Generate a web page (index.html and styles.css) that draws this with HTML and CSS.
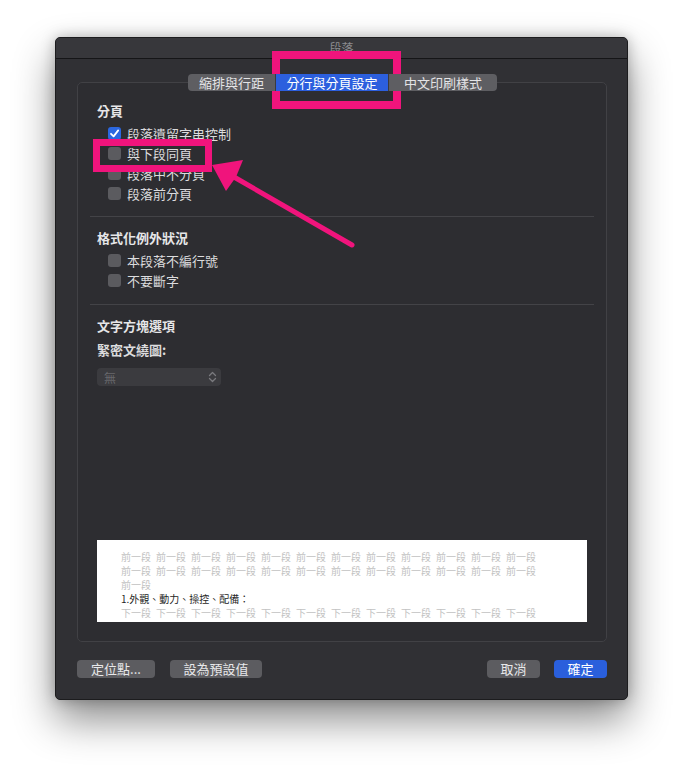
FILE: index.html
```html
<!DOCTYPE html>
<html lang="zh-Hant">
<head>
    <meta charset="UTF-8">
    <meta name="viewport" content="width=device-width, initial-scale=1.0">
    <title>段落</title>
    <link rel="stylesheet" href="styles.css">
</head>
<body>
    <div class="window">
        <div class="titlebar">段落</div>
        <div class="content">
            <div class="tabs">
                <div class="tab tab-indent">縮排與行距</div>
                <div class="tab tab-break active">分行與分頁設定</div>
                <div class="tab tab-cjk">中文印刷樣式</div>
            </div>
            <div class="panel">
                <section class="group group-first">
                    <h2>分頁</h2>
                    <label class="check"><span class="box checked"><svg width="13" height="13" viewBox="0 0 13 13"><path d="M3 6.8 L5.6 9.4 L10.2 3.4" fill="none" stroke="#fff" stroke-width="1.8" stroke-linecap="round" stroke-linejoin="round"/></svg></span>段落遺留字串控制</label>
                    <label class="check"><span class="box"></span>與下段同頁</label>
                    <label class="check"><span class="box"></span>段落中不分頁</label>
                    <label class="check"><span class="box"></span>段落前分頁</label>
                </section>
                <div class="sep"></div>
                <section class="group group-mid">
                    <h2>格式化例外狀況</h2>
                    <label class="check"><span class="box"></span>本段落不編行號</label>
                    <label class="check"><span class="box"></span>不要斷字</label>
                </section>
                <div class="sep"></div>
                <section class="group group-last">
                    <h2>文字方塊選項</h2>
                    <div class="field-label">緊密文繞圖:</div>
                    <div class="select">
                        <span>無</span>
                        <svg width="9" height="12" viewBox="0 0 9 12"><path d="M1.5 4.5 L4.5 1.5 L7.5 4.5 M1.5 7.5 L4.5 10.5 L7.5 7.5" fill="none" stroke="#7a7a7e" stroke-width="1.3" stroke-linecap="round" stroke-linejoin="round"/></svg>
                    </div>
                </section>
                <div class="preview">
                    <div class="preview-text" id="preview"></div>
                </div>
            </div>
            <div class="buttons">
                <div class="btn btn-tabs">定位點...</div>
                <div class="btn btn-default">設為預設值</div>
                <div class="spacer"></div>
                <div class="btn btn-cancel">取消</div>
                <div class="btn btn-ok">確定</div>
            </div>
        </div>
    </div>

    <!-- annotations drawn over the dialog -->
    <div class="mark mark-tab"></div>
    <div class="mark mark-row"></div>
    <svg class="arrow" width="684" height="774" viewBox="0 0 684 774">
        <line x1="234" y1="177" x2="352" y2="245" stroke="#f0147c" stroke-width="5" stroke-linecap="round"/>
        <polygon points="212,165 243,160 236,177 226,191" fill="#f0147c"/>
    </svg>

    <script>
        const preview = document.getElementById('preview');
        let html = '';
        for (let i = 0; i < 25; i++) {
            html += '<span class="word">前一段</span>';
        }
        html += '<div class="current">1.外觀、動力、操控、配備：</div>';
        for (let i = 0; i < 12; i++) {
            html += '<span class="word">下一段</span>';
        }
        preview.innerHTML = html;
    </script>
</body>
</html>
```

FILE: styles.css
```css
* {
    margin: 0;
    padding: 0;
    box-sizing: border-box;
}

body {
    width: 684px;
    height: 774px;
    background: #fff;
    font-family: "Noto Sans CJK TC", "Noto Sans", sans-serif;
    overflow: hidden;
}

.window {
    margin: 37px 0 0 55px;
    width: 573px;
    height: 663px;
    background: #303034;
    border: 1px solid #1c1c1e;
    border-radius: 5px;
    box-shadow: 0 20px 40px rgba(0, 0, 0, 0.45), 0 0 14px rgba(0, 0, 0, 0.25);
    display: flex;
    flex-direction: column;
    overflow: hidden;
}

.titlebar {
    height: 21px;
    background: #37373b;
    border-bottom: 1px solid #151517;
    color: #8c8c90;
    font-size: 12px;
    line-height: 20px;
    text-align: center;
}

.content {
    flex: 1;
    padding: 15px 20px 0 21px;
    display: flex;
    flex-direction: column;
}

.tabs {
    position: relative;
    z-index: 1;
    display: flex;
    justify-content: center;
    height: 17px;
    padding-left: 1px;
}

.tab {
    height: 17px;
    line-height: 17px;
    font-size: 13px;
    color: #e4e4e6;
    background: #5e5e62;
    text-align: center;
    border-right: 1px solid #3a3a3e;
}

.tab-indent {
    width: 88px;
    border-radius: 4px 0 0 4px;
}

.tab-break {
    width: 113px;
}

.tab-cjk {
    width: 108px;
    border-right: none;
    border-radius: 0 4px 4px 0;
}

.tab.active {
    background: #2c5fde;
    color: #fff;
}

.panel {
    margin-top: -9px;
    height: 560px;
    background: #2d2d31;
    border: 1px solid #414145;
    border-radius: 5px;
    padding: 18px 19px 19px 19px;
    display: flex;
    flex-direction: column;
}

h2 {
    font-size: 13px;
    font-weight: bold;
    color: #e6e6e8;
    line-height: 20px;
}

.group-first {
    padding-bottom: 13px;
}

.group-mid {
    padding: 11px 0 14px;
}

.group-last {
    padding-top: 11px;
}

.group h2 {
    margin-bottom: 2px;
}

.check {
    display: flex;
    align-items: center;
    height: 20px;
    padding-left: 11px;
    font-size: 13px;
    color: #dcdcde;
}

.box {
    width: 13px;
    height: 13px;
    margin-right: 6px;
    border-radius: 3px;
    background: #5b5b5f;
    display: flex;
}

.box.checked {
    background: #2b67e0;
}

.sep {
    height: 1px;
    margin: 0 -7px;
    background: #434347;
}

.field-label {
    margin-top: 4px;
    font-size: 13px;
    font-weight: bold;
    line-height: 20px;
    color: #dcdcde;
}

.select {
    margin-top: 8px;
    width: 124px;
    height: 18px;
    border-radius: 4px;
    background: #3b3b3f;
    display: flex;
    align-items: center;
    justify-content: space-between;
    padding: 0 4px 0 7px;
    font-size: 12px;
    color: #68686c;
}

.preview {
    margin-top: auto;
    height: 82px;
    background: #fff;
    overflow: hidden;
    padding: 10px 0 0 24px;
}

.preview-text {
    width: 430px;
    font-size: 10px;
    line-height: 14px;
    color: #c2c2c2;
}

.word {
    display: inline-block;
    width: 35px;
}

.current {
    color: #1e1e1e;
}

.buttons {
    margin-top: 18px;
    display: flex;
    gap: 15px;
}

.spacer {
    flex: 1;
}

.btn {
    height: 18px;
    line-height: 18px;
    border-radius: 4px;
    background: #5c5c60;
    color: #e8e8ea;
    font-size: 13px;
    text-align: center;
}

.btn-tabs {
    width: 78px;
}

.btn-default {
    width: 92px;
}

.btn-cancel {
    width: 53px;
    margin-right: -1px;
}

.btn-ok {
    width: 53px;
    background: #2a5fdc;
    color: #fff;
}

.mark {
    position: absolute;
    border-style: solid;
    border-color: #f0147c;
}

.mark-tab {
    left: 272px;
    top: 51px;
    width: 129px;
    height: 58px;
    border-width: 8px;
}

.mark-row {
    left: 93px;
    top: 139px;
    width: 119px;
    height: 33px;
    border-width: 7px;
}

.arrow {
    position: absolute;
    left: 0;
    top: 0;
    pointer-events: none;
}
```
